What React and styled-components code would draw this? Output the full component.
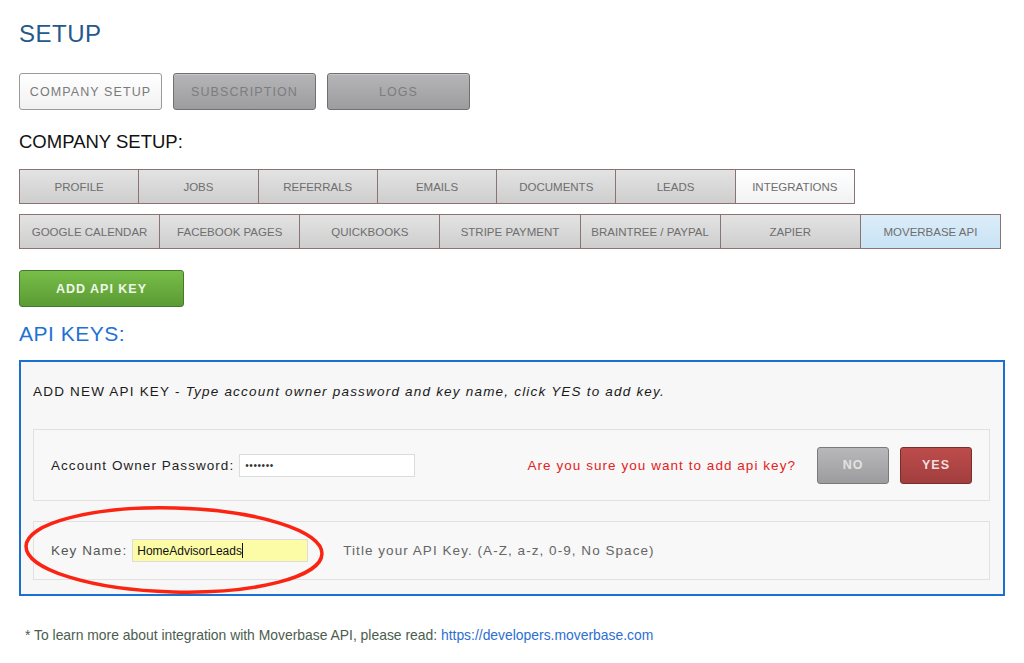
import React from "react";
import styled, { createGlobalStyle, css } from "styled-components";

const Global = createGlobalStyle`
  html, body { margin: 0; padding: 0; background: #fff; }
  body { font-family: "Liberation Sans", Arial, Helvetica, sans-serif; }
  * { box-sizing: border-box; }
`;

const Page = styled.div`
  position: relative;
  padding: 20px 19px 0 19px;
  width: 1024px;
  height: 663px;
  overflow: hidden;
`;

const Title = styled.h1`
  margin: 0;
  font-size: 24px;
  line-height: 28px;
  font-weight: normal;
  letter-spacing: 0.5px;
  color: #24598a;
`;

const TopTabs = styled.div`
  display: flex;
  gap: 11px;
  margin-top: 25px;
`;

const TopTab = styled.div`
  width: 143px;
  height: 37px;
  display: flex;
  align-items: center;
  justify-content: center;
  border-radius: 3px;
  font-size: 12.5px;
  letter-spacing: 1.1px;
  ${(p) =>
    p.$active
      ? css`
          border: 1px solid #9a9a9a;
          background: linear-gradient(#ffffff, #f1f1f1);
          color: #7a7a7a;
        `
      : css`
          border: 1px solid #707070;
          background: linear-gradient(#b5b5b7, #9d9d9f);
          color: #7c7c7e;
          box-shadow: inset 0 1px 0 rgba(255, 255, 255, 0.25);
        `}
`;

const Subtitle = styled.h2`
  margin: 21px 0 0 0;
  font-size: 18.5px;
  line-height: 22px;
  font-weight: normal;
  color: #111;
`;

const TabRow = styled.div`
  display: flex;
  width: ${(p) => p.$width}px;
  height: 35px;
  margin-top: ${(p) => p.$mt}px;
  border: 1px solid #8a7373;
`;

const Tab = styled.div`
  flex: 1;
  display: flex;
  align-items: center;
  justify-content: center;
  font-size: 11.5px;
  color: #6e6e6e;
  white-space: nowrap;
  & + & { border-left: 1px solid #8a7373; }
  background: ${(p) =>
    p.$active === "white"
      ? "linear-gradient(#ffffff, #f2f2f2)"
      : p.$active === "blue"
      ? "linear-gradient(#dcedf8, #c8e3f5)"
      : "linear-gradient(#e3e3e3, #cecece)"};
`;

const GreenButton = styled.div`
  margin-top: 21px;
  width: 165px;
  height: 37px;
  display: flex;
  align-items: center;
  justify-content: center;
  border-radius: 3px;
  border: 1px solid #447a2e;
  background: linear-gradient(#78bd49, #5b9b34);
  color: #eef7e8;
  font-size: 12.5px;
  font-weight: bold;
  letter-spacing: 1px;
`;

const SectionTitle = styled.h2`
  margin: 14px 0 0 0;
  font-size: 21px;
  line-height: 26px;
  font-weight: normal;
  letter-spacing: 0.5px;
  color: #1f72d3;
`;

const BlueBox = styled.div`
  position: relative;
  margin-top: 13px;
  width: 986px;
  border: 2px solid #1b6fd0;
  background: #f7f7f7;
  padding: 21px 13px 14px 12px;
`;

const Intro = styled.div`
  font-size: 13.5px;
  letter-spacing: 1.2px;
  color: #1a1a1a;
  line-height: 18px;
  em { font-style: italic; }
`;

const Panel = styled.div`
  display: flex;
  align-items: center;
  height: ${(p) => p.$h}px;
  margin-top: ${(p) => p.$mt}px;
  border: 1px solid #e1e1e1;
  background: #f8f8f8;
  padding: 0 17px 0 17px;
`;

const Label = styled.span`
  font-size: 13.5px;
  letter-spacing: 1.05px;
  color: ${(p) => p.$color || "#1f1f1f"};
  white-space: nowrap;
`;

const Input = styled.div`
  width: 176px;
  height: 23px;
  margin-left: ${(p) => p.$ml}px;
  border: 1px solid #dcdcdc;
  background: ${(p) => (p.$yellow ? "#fdfca6" : "#fff")};
  display: flex;
  align-items: center;
  padding-left: ${(p) => (p.$dots ? 5 : 4)}px;
  font-size: ${(p) => (p.$dots ? 10 : 12)}px;
  color: ${(p) => (p.$dots ? "#333" : "#111")};
  letter-spacing: ${(p) => (p.$dots ? "0.6px" : "0")};
`;

const Caret = styled.span`
  display: inline-block;
  width: 1px;
  height: 15px;
  background: #111;
`;

const Confirm = styled.span`
  margin-left: auto;
  font-size: 13.5px;
  letter-spacing: 1.05px;
  color: #e32222;
`;

const ActionButton = styled.div`
  width: 72px;
  height: 37px;
  margin-left: ${(p) => p.$ml}px;
  display: flex;
  align-items: center;
  justify-content: center;
  border-radius: 3px;
  font-size: 12.5px;
  font-weight: bold;
  letter-spacing: 1px;
  ${(p) =>
    p.$red
      ? css`
          border: 1px solid #7a2d2d;
          background: linear-gradient(#bd4c4c, #a23e3e);
          color: #f1dede;
        `
      : css`
          border: 1px solid #7a7a7a;
          background: linear-gradient(#b8b8ba, #9c9c9e);
          color: #e2e2e2;
        `}
`;

const Help = styled.span`
  margin-left: 35px;
  font-size: 13.5px;
  letter-spacing: 1.05px;
  color: #666;
`;

const Footer = styled.div`
  margin-top: 31px;
  padding-left: 6px;
  font-size: 13.9px;
  color: #4b5d4e;
  a { color: #2c6fd1; text-decoration: none; }
`;

const Ellipse = styled.svg`
  position: absolute;
  left: 1px;
  top: 143px;
  pointer-events: none;
`;

const topTabs = ["COMPANY SETUP", "SUBSCRIPTION", "LOGS"];
const row1 = ["PROFILE", "JOBS", "REFERRALS", "EMAILS", "DOCUMENTS", "LEADS", "INTEGRATIONS"];
const row2 = [
  "GOOGLE CALENDAR",
  "FACEBOOK PAGES",
  "QUICKBOOKS",
  "STRIPE PAYMENT",
  "BRAINTREE / PAYPAL",
  "ZAPIER",
  "MOVERBASE API",
];

export default function App() {
  return (
    <Page>
      <Global />
      <Title>SETUP</Title>
      <TopTabs>
        {topTabs.map((t, i) => (
          <TopTab key={t} $active={i === 0}>
            {t}
          </TopTab>
        ))}
      </TopTabs>
      <Subtitle>COMPANY SETUP:</Subtitle>
      <TabRow $width={836} $mt={16}>
        {row1.map((t) => (
          <Tab key={t} $active={t === "INTEGRATIONS" ? "white" : undefined}>
            {t}
          </Tab>
        ))}
      </TabRow>
      <TabRow $width={982} $mt={10}>
        {row2.map((t) => (
          <Tab key={t} $active={t === "MOVERBASE API" ? "blue" : undefined}>
            {t}
          </Tab>
        ))}
      </TabRow>
      <GreenButton>ADD API KEY</GreenButton>
      <SectionTitle>API KEYS:</SectionTitle>
      <BlueBox>
        <Intro>
          ADD NEW API KEY - <em>Type account owner password and key name, click YES to add key.</em>
        </Intro>
        <Panel $h={72} $mt={28}>
          <Label>Account Owner Password:</Label>
          <Input $ml={5} $dots>
            •••••••
          </Input>
          <Confirm>Are you sure you want to add api key?</Confirm>
          <ActionButton $ml={21}>NO</ActionButton>
          <ActionButton $ml={11} $red>
            YES
          </ActionButton>
        </Panel>
        <Panel $h={59} $mt={20}>
          <Label $color="#555">Key Name:</Label>
          <Input $ml={5} $yellow>
            HomeAdvisorLeads
            <Caret />
          </Input>
          <Help>Title your API Key. (A-Z, a-z, 0-9, No Space)</Help>
        </Panel>
        <Ellipse width="306" height="92" viewBox="0 0 306 92">
          <ellipse
            cx="152"
            cy="45"
            rx="148"
            ry="42"
            fill="none"
            stroke="#fb2412"
            strokeWidth="3.5"
            transform="rotate(1.5 152 45)"
          />
        </Ellipse>
      </BlueBox>
      <Footer>
        * To learn more about integration with Moverbase API, please read:{" "}
        <a href="#">https://developers.moverbase.com</a>
      </Footer>
    </Page>
  );
}
